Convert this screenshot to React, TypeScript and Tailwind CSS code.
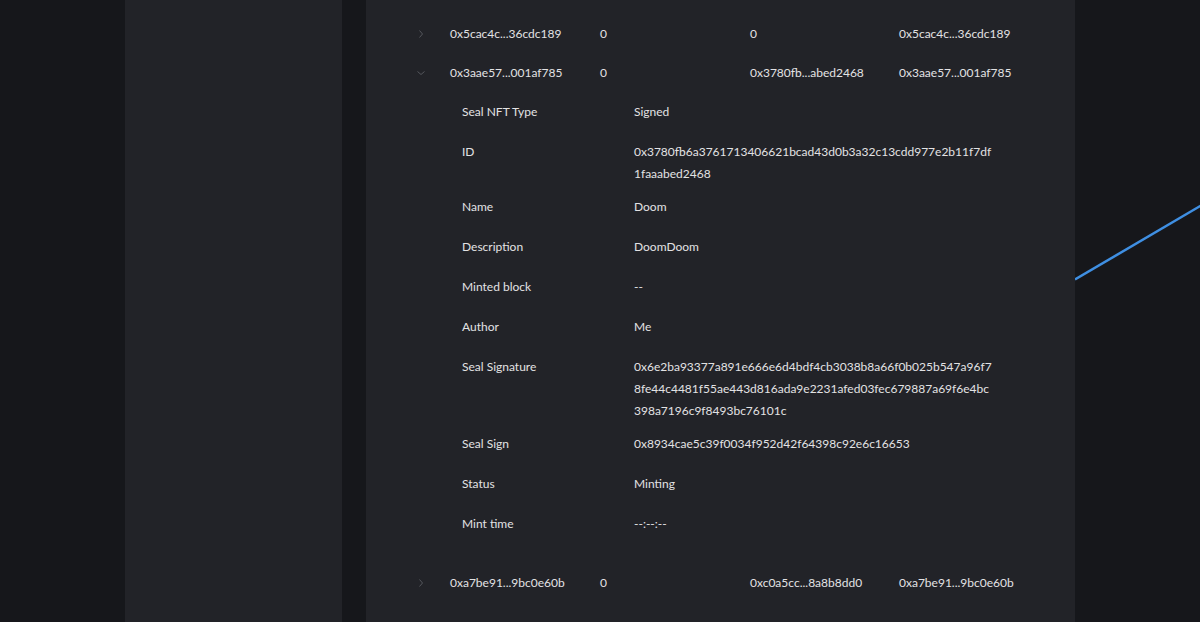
import React from "react";

type Row = {
  hash: string;
  amount: string;
  id: string;
  owner: string;
  open?: boolean;
};

const rows: Row[] = [
  { hash: "0x5cac4c...36cdc189", amount: "0", id: "0", owner: "0x5cac4c...36cdc189" },
  { hash: "0x3aae57...001af785", amount: "0", id: "0x3780fb...abed2468", owner: "0x3aae57...001af785", open: true },
  { hash: "0xa7be91...9bc0e60b", amount: "0", id: "0xc0a5cc...8a8b8dd0", owner: "0xa7be91...9bc0e60b" },
];

const details: { label: string; lines: string[] }[] = [
  { label: "Seal NFT Type", lines: ["Signed"] },
  { label: "ID", lines: ["0x3780fb6a3761713406621bcad43d0b3a32c13cdd977e2b11f7df", "1faaabed2468"] },
  { label: "Name", lines: ["Doom"] },
  { label: "Description", lines: ["DoomDoom"] },
  { label: "Minted block", lines: ["--"] },
  { label: "Author", lines: ["Me"] },
  {
    label: "Seal Signature",
    lines: [
      "0x6e2ba93377a891e666e6d4bdf4cb3038b8a66f0b025b547a96f7",
      "8fe44c4481f55ae443d816ada9e2231afed03fec679887a69f6e4bc",
      "398a7196c9f8493bc76101c",
    ],
  },
  { label: "Seal Sign", lines: ["0x8934cae5c39f0034f952d42f64398c92e6c16653"] },
  { label: "Status", lines: ["Minting"] },
  { label: "Mint time", lines: ["--:--:--"] },
];

const Chevron = ({ open }: { open?: boolean }) => (
  <svg width="10" height="10" viewBox="0 0 10 10" className="text-[#54565c]">
    {open ? (
      <polyline points="1.5,3.5 5,6.5 8.5,3.5" fill="none" stroke="currentColor" strokeWidth="1" />
    ) : (
      <polyline points="3.5,1.5 6.5,5 3.5,8.5" fill="none" stroke="currentColor" strokeWidth="1" />
    )}
  </svg>
);

const NftRow = ({ row }: { row: Row }) => (
  <div className="flex h-[39px] items-center">
    <div className="flex w-[84px] justify-end pr-[24px]">
      <Chevron open={row.open} />
    </div>
    <div className="w-[150px]">{row.hash}</div>
    <div className="w-[150px]">{row.amount}</div>
    <div className="w-[149px]">{row.id}</div>
    <div className="w-[150px]">{row.owner}</div>
  </div>
);

export default function App() {
  return (
    <div
      className="flex h-[622px] w-[1200px] overflow-hidden bg-[#16171b] text-[12px] text-[#e2e2e4]"
      style={{ fontFamily: "Lato, 'Noto Sans', sans-serif" }}
    >
      <div className="w-[125px] shrink-0" />
      <div className="w-[217px] shrink-0 bg-[#222328]" />
      <div className="w-[24px] shrink-0" />

      <div className="w-[709px] shrink-0 bg-[#222328] pt-[14px]">
        <NftRow row={rows[0]} />
        <NftRow row={rows[1]} />
        <div className="pt-[3px] pb-[16px]">
          {details.map((d) => (
            <div key={d.label} className="flex min-h-[40px] py-[5.5px] pl-[96px] leading-[22px]">
              <div className="w-[172px] shrink-0">{d.label}</div>
              <div>
                {d.lines.map((l) => (
                  <div key={l}>{l}</div>
                ))}
              </div>
            </div>
          ))}
        </div>
        <NftRow row={rows[2]} />
      </div>

      <div className="relative flex-1">
        <svg className="absolute inset-0" width="125" height="622" viewBox="0 0 125 622">
          <line x1="0" y1="279.5" x2="126" y2="205.5" stroke="#3f8fe2" strokeWidth="2.5" />
        </svg>
      </div>
    </div>
  );
}
